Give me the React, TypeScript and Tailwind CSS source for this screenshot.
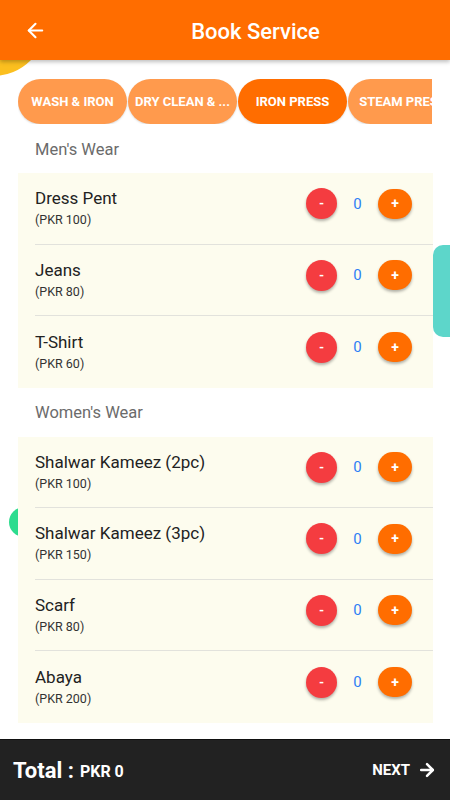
import { ArrowLeft, ArrowRight } from 'lucide-react';

type Item = { name: string; price: number };

const tabs = ['WASH & IRON', 'DRY CLEAN & ...', 'IRON PRESS', 'STEAM PRESS'];

const mens: Item[] = [
  { name: 'Dress Pent', price: 100 },
  { name: 'Jeans', price: 80 },
  { name: 'T-Shirt', price: 60 },
];

const womens: Item[] = [
  { name: 'Shalwar Kameez (2pc)', price: 100 },
  { name: 'Shalwar Kameez (3pc)', price: 150 },
  { name: 'Scarf', price: 80 },
  { name: 'Abaya', price: 200 },
];

function Row({ item, last }: { item: Item; last: boolean }) {
  return (
    <div className="pl-[17px]">
      <div
        className={`h-[71.5px] flex items-center pr-[21px] ${last ? '' : 'border-b border-[#e2e2dc]'}`}
      >
        <div className="flex-1 pt-[1px]">
          <p className="text-[17px] leading-[20px] text-[#222]">{item.name}</p>
          <p className="text-[12.5px] leading-[18px] text-[#333] mt-[3px]">(PKR {item.price})</p>
        </div>
        <div className="flex items-center mb-[9px]">
          <button className="w-[31px] h-[31px] rounded-full bg-[#f43c40] text-white text-[13px] font-bold shadow-[0_2px_3px_rgba(0,0,0,0.3)] flex items-center justify-center">
            -
          </button>
          <span className="w-[41px] text-center text-[15px] text-[#2f7ff5]">0</span>
          <button className="w-[34px] h-[30px] rounded-full bg-[#ff6d00] text-white text-[14px] font-bold shadow-[0_2px_3px_rgba(0,0,0,0.3)] flex items-center justify-center">
            +
          </button>
        </div>
      </div>
    </div>
  );
}

function Section({ title, items }: { title: string; items: Item[] }) {
  return (
    <>
      <div className="h-[49px] flex items-center pl-[35px] pt-[3px] text-[16.5px] text-[#6b6b6b]">{title}</div>
      <div className="mx-[18px] w-[415px] bg-[#fdfcee]">
        {items.map((it, i) => (
          <Row key={it.name} item={it} last={i === items.length - 1} />
        ))}
      </div>
    </>
  );
}

export default function App() {
  return (
    <div
      className="relative w-[450px] h-[800px] overflow-hidden bg-white flex flex-col"
      style={{ fontFamily: 'Roboto, "Noto Sans", sans-serif' }}
    >
      {/* background blobs */}
      <div className="absolute left-[-60px] top-[-30px] w-[106px] h-[106px] rounded-full bg-[#fbbf1f]" />
      <div className="absolute right-0 top-[245px] w-[17px] h-[92px] rounded-l-[10px] bg-[#5dd6ca]" />
      <div className="absolute left-[9px] top-[507px] w-[30px] h-[30px] rounded-full bg-[#2ddc8e]" />

      <header className="relative z-10 h-[60px] shrink-0 bg-[#ff6d00] shadow-[0_2px_4px_rgba(0,0,0,0.25)] flex items-center">
        <ArrowLeft className="ml-[24px] w-[23px] h-[23px] text-white" strokeWidth={2.2} />
        <h1 className="flex-1 text-center pl-[14px] pt-[2px] text-white text-[22px] font-medium">Book Service</h1>
      </header>

      <main className="relative z-10 flex-1">
        <div className="mt-[19px] ml-[18px] w-[414px] overflow-hidden flex gap-[1px]">
          {tabs.map((t) => (
            <div
              key={t}
              className={`shrink-0 w-[109px] h-[45px] rounded-full flex items-center justify-center text-white text-[13px] font-bold whitespace-nowrap shadow-[0_1px_2px_rgba(0,0,0,0.15)] ${
                t === 'IRON PRESS' ? 'bg-[#ff6d00]' : 'bg-[#ff9a4d]'
              }`}
            >
              <span className="overflow-hidden">{t}</span>
            </div>
          ))}
        </div>
        <Section title="Men's Wear" items={mens} />
        <Section title="Women's Wear" items={womens} />
      </main>

      <footer className="relative z-10 h-[61px] shrink-0 bg-[#222] border-t border-[#111] flex items-center px-[13px] text-white">
        <span className="text-[22px] font-bold">Total :</span>
        <span className="ml-[6px] mt-[3px] text-[16px] font-bold">PKR 0</span>
        <span className="ml-auto text-[15px] font-bold">NEXT</span>
        <ArrowRight className="ml-[7px] w-[20px] h-[20px]" strokeWidth={3} />
      </footer>
    </div>
  );
}
